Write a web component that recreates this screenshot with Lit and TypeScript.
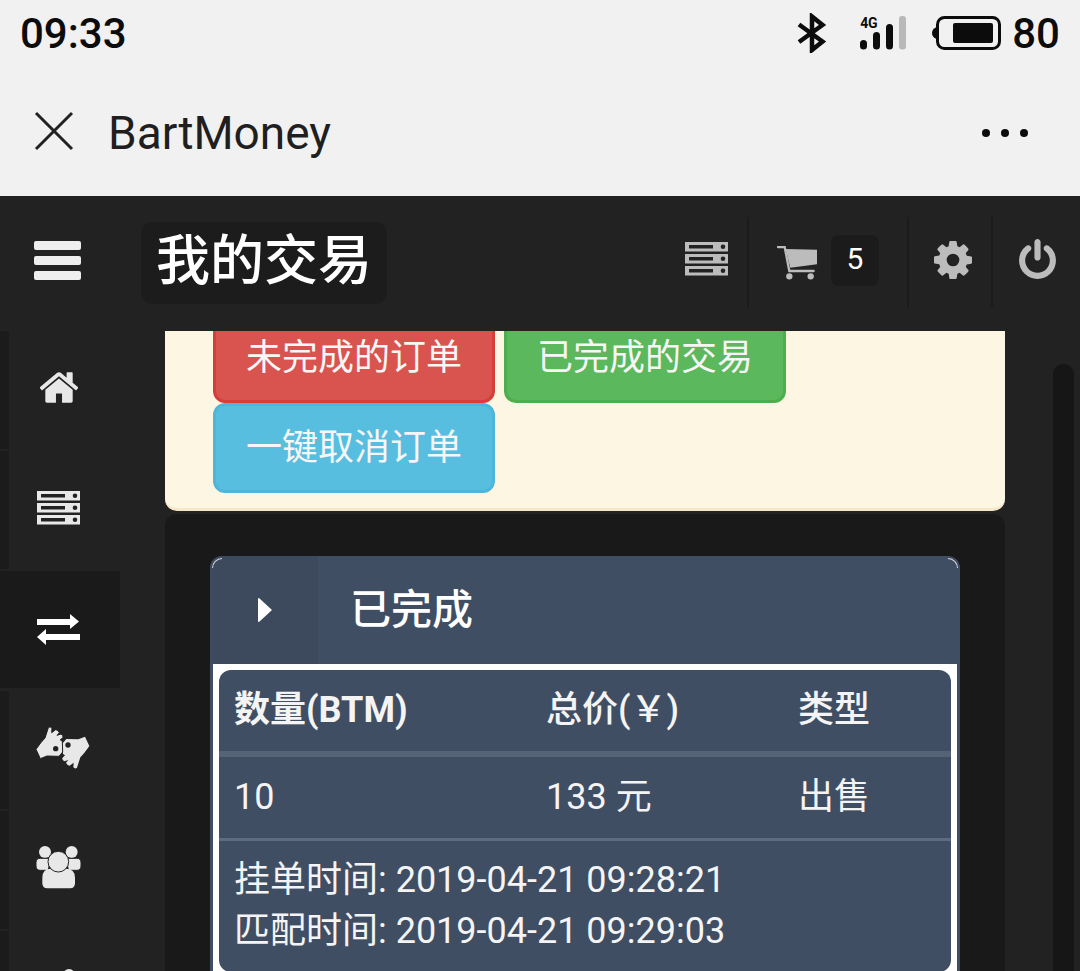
import { LitElement, html, css, svg } from "lit";
import { customElement } from "lit/decorators.js";

const COG = "M1152 896q0-106-75-181t-181-75-181 75-75 181 75 181 181 75 181-75 75-181zm512-109v222q0 12-8 23t-20 13l-185 28q-19 54-39 91 35 50 107 138 10 12 10 25t-9 23q-27 37-99 108t-94 71q-12 0-26-9l-138-108q-44 23-91 38-16 136-29 186-7 28-36 28h-222q-14 0-24.500-8.500t-11.500-21.500l-28-184q-49-16-90-37l-141 107q-10 9-25 9-14 0-25-11-126-114-165-168-7-10-7-23 0-12 8-23 15-21 51-66.500t54-70.500q-27-50-41-99l-183-27q-13-2-21-12.500t-8-23.500v-222q0-12 8-23t19-13l186-28q14-46 39-92-40-57-107-138-10-12-10-24 0-10 9-23 26-36 98.500-107.500t94.500-71.500q13 0 26 10l138 107q44-23 91-38 16-136 29-186 7-28 36-28h222q14 0 24.500 8.500t11.500 21.500l28 184q49 16 90 37l142-107q9-9 24-9 13 0 25 10 129 119 165 170 7 8 7 22 0 12-8 23-15 21-51 66.500t-54 70.500q26 50 41 98l183 28q13 2 21 12.500t8 23.500z";
const POWER = "M1664 896q0 156-61 298t-164 245-245 164-298 61-298-61-245-164-164-245-61-298q0-182 80.500-343t226.500-270q43-32 95.500-25t83.500 50q32 42 24.500 94.500t-49.500 84.500q-98 74-151.500 181t-53.500 228q0 104 40.500 198.500t109.500 163.500 163.500 109.500 198.500 40.500 198.500-40.500 163.500-109.500 109.500-163.500 40.500-198.500q0-121-53.500-228t-151.500-181q-42-32-49.500-84.500t24.500-94.500q31-43 84-50t95 25q146 109 226.500 270t80.500 343zm-640-768v640q0 52-38 90t-90 38-90-38-38-90v-640q0-52 38-90t90-38 90 38 38 90z";
const HOME = "M1472 992v480q0 26-19 45t-45 19h-384v-384h-256v384h-384q-26 0-45-19t-19-45v-480q0-1 .5-3t.5-3l575-474 575 474q1 2 1 6zm223-69l-62 74q-8 9-21 11h-3q-13 0-21-7l-692-577-692 577q-12 8-24 7-13-2-21-11l-62-74q-8-10-7-23.500t11-21.500l719-599q32-26 76-26t76 26l244 204v-195q0-14 9-23t23-9h192q14 0 23 9t9 23v408l219 182q10 8 11 21.500t-7 23.500z";
const HAND = "M33 92 Q48 70 60 58 L70 27 Q75 22 81 28 L80 42 L92 33 Q99 33 103 42 L96 50 L108 46 Q115 50 114 56 L106 64 L112 68 L113 100 L102 113 L66 112 L46 120 Z";

const serverIcon = (fill: string, bg: string) => html`<svg width="43" height="34" viewBox="0 0 43 34">
  ${[0, 12, 24].map((y) => svg`
    <rect x="0" y="${y}" width="43" height="9.500" fill="${fill}"/>
    <rect x="4" y="${y + 3}" width="24" height="3.500" fill="${bg}"/>
    <circle cx="38" cy="${y + 4.750}" r="2.300" fill="${bg}"/>`)}
</svg>`;

@customElement("app-root")
export class AppRoot extends LitElement {
  static styles = css`
    :host {
      display: block;
      width: 1080px;
      height: 971px;
      overflow: hidden;
      font-family: Roboto, "Noto Sans CJK SC", sans-serif;
      background: #222;
    }
    svg { display: block; flex: none; }

    .status {
      height: 66px;
      background: #f1f1f1;
      display: flex;
      align-items: center;
      padding: 0 20px 0 20px;
      color: #0c0c0c;
    }
    .clock { font-size: 42px; font-weight: 500; line-height: 64px; padding-top: 2px; flex: 1; }
    .bt { margin-right: 33px; }
    .signal { margin-right: 25px; }
    .four-g {
      font-size: 14px;
      font-weight: 700;
      line-height: 14px;
      letter-spacing: -0.300px;
    }
    .net { position: relative; width: 47px; height: 34px; }
    .net .four-g { position: absolute; top: 0; left: 0; }
    .net svg { position: absolute; left: 0; top: 0; }
    .pct { font-size: 42px; font-weight: 500; line-height: 64px; padding-top: 2px; margin-left: 11px; }

    .title {
      height: 130px;
      background: #f1f1f1;
      display: flex;
      align-items: center;
      padding: 0 0 0 34px;
    }
    .title .name { font-size: 46px; color: #1f1f1f; margin-left: 34px; flex: 1; line-height: 120px; padding-top: 4px; }
    .title .more { margin: 3px 52px 0 0; }

    .top {
      height: 135px;
      background: #222;
      display: flex;
      align-items: center;
    }
    .burger {
      width: 47px;
      margin: 0 0 6px 34px;
      display: flex;
      flex-direction: column;
      gap: 6px;
    }
    .burger i { display: block; height: 9px; background: #eee; border-radius: 2px; }
    .chip {
      margin: 0 0 2px 60px;
      height: 82px;
      width: 246px;
      box-sizing: border-box;
      background: #1c1c1c;
      border-radius: 12px;
      color: #fff;
      font-size: 54px;
      font-weight: 500;
      line-height: 80px;
      text-align: center;
      white-space: nowrap;
    }
    .tools { margin: 0 0 4px auto; display: flex; align-items: center; height: 90px; }
    .div { width: 2px; height: 90px; background: #1b1b1b; flex: none; }
    .badge {
      width: 48px;
      height: 51px;
      background: #1b1b1b;
      border-radius: 8px;
      color: #fff;
      font-size: 30px;
      line-height: 48px;
      text-align: center;
      margin: 0 28px 2px 14px;
    }
    .t-server { margin: 0 19px 6px 0; }
    .t-cart { margin: 3px 0 0 28px; }
    .t-cog { margin: 0 19px 4px 25px; }
    .t-pow { margin: 0 24px 6px 26px; }

    .body { display: flex; height: 640px; background: #222; overflow: hidden; }
    .side { width: 120px; flex: none; display: flex; flex-direction: column; }
    .item {
      height: 118px;
      flex: none;
      margin-bottom: 2px;
      border-left: 9px solid #1b1b1b;
      display: flex;
      align-items: center;
      justify-content: center;
      padding: 0 12px 5px 0;
      box-sizing: border-box;
      width: 120px;
    }
    .item.on {
      height: 117px;
      background: #1a1a1a;
      border-left-color: #1a1a1a;
      padding-bottom: 0;
      margin-bottom: 3px;
    }
    .hands { margin-left: 9px; }

    .main { width: 840px; margin-left: 45px; flex: none; overflow: hidden; }
    .notice {
      margin-top: -18px;
      background: #fdf6e3;
      border-bottom: 3px solid #f5e8c8;
      border-radius: 0 0 12px 12px;
      padding: 0 48px 18px;
      box-sizing: border-box;
      height: 198px;
      display: flex;
      flex-wrap: wrap;
      align-content: flex-start;
      column-gap: 9px;
    }
    .btn {
      width: 282px;
      height: 90px;
      box-sizing: border-box;
      border-radius: 12px;
      border: 3px solid;
      color: #f6f6f6;
      font-size: 36px;
      line-height: 84px;
      text-align: center;
      white-space: nowrap;
    }
    .red { background: #d9534f; border-color: #d43f3a; }
    .green { background: #5cb85c; border-color: #4cae4c; }
    .blue { background: #58bee0; border-color: #4db6da; }

    .panel {
      margin-top: 3px;
      background: #191919;
      border-radius: 12px 12px 0 0;
      padding: 42px 45px 0 45px;
      height: 460px;
      box-sizing: border-box;
    }
    .widget { position: relative; width: 750px; }
    .w-head {
      height: 108px;
      background: #404e64;
      border-radius: 12px 12px 0 0;
      display: flex;
      align-items: center;
      overflow: hidden;
    }
    .w-arrow {
      width: 108px;
      height: 108px;
      background: #3d4a5d;
      display: flex;
      align-items: center;
      justify-content: center;
      flex: none;
      padding-left: 2px;
      box-sizing: border-box;
    }
    .w-title { color: #fff; font-size: 41px; font-weight: 500; margin-left: 32px; line-height: 106px; }
    .arc {
      position: absolute;
      top: 2px;
      width: 10px;
      height: 10px;
      border-top: 1px solid rgba(255,255,255,.8);
      box-sizing: border-box;
    }
    .arc.l { left: 2px; border-left: 1px solid rgba(255,255,255,.8); border-top-left-radius: 10px; }
    .arc.r { right: 2px; border-right: 1px solid rgba(255,255,255,.8); border-top-right-radius: 10px; }
    .w-body {
      border: solid #404e64;
      border-width: 0 3px;
      background: #fff;
      padding: 6px 6px 0;
    }
    .card {
      background: #404e64;
      border-radius: 12px;
      color: #f4f4f4;
      font-size: 36px;
      height: 302px;
      overflow: hidden;
    }
    .row {
      display: grid;
      grid-template-columns: 312px 252px 1fr;
      padding-left: 15px;
      height: 81px;
      line-height: 80px;
      box-sizing: content-box;
      white-space: nowrap;
    }
    .head { font-weight: 700; border-bottom: 6px solid #556377; }
    .head span:nth-child(n+2) { font-weight: 500; }
    .vals { border-bottom: 3px solid #5f6c80; }
    .info { padding: 14px 0 0 15px; line-height: 51px; white-space: nowrap; }

    .bar {
      width: 21px;
      flex: none;
      margin: 33px 0 0 48px;
      background: #161616;
      border-radius: 10px 10px 0 0;
    }
  `;

  render() {
    return html`
      <div class="status">
        <span class="clock">09:33</span>
        <svg class="bt" width="30" height="40" viewBox="0 0 30 40">
          <path d="M2 11.500 L25.500 28.500 L15 37 V3.500 L25.500 12 L2 29" fill="none" stroke="#0c0c0c" stroke-width="4.500"/>
        </svg>
        <div class="net signal">
          <span class="four-g">4G</span>
          <svg width="47" height="34" viewBox="0 0 47 34">
            <rect x="0" y="24" width="7" height="9.500" rx="3.500" fill="#0c0c0c"/>
            <rect x="13" y="16" width="7" height="17.500" rx="3.500" fill="#0c0c0c"/>
            <rect x="26" y="8" width="7" height="25.500" rx="3.500" fill="#0c0c0c"/>
            <rect x="39" y="0" width="7" height="33.500" rx="3" fill="#b9b9b9"/>
          </svg>
        </div>
        <svg width="69" height="34" viewBox="0 0 69 34">
          <path d="M4.500 11 Q0 13 0 17 Q0 21 4.500 23 Z" fill="#0c0c0c"/>
          <rect x="5.500" y="1.500" width="62" height="31" rx="7" fill="none" stroke="#0c0c0c" stroke-width="3"/>
          <rect x="21" y="7" width="40" height="20" rx="2" fill="#0c0c0c"/>
        </svg>
        <span class="pct">80</span>
      </div>

      <div class="title">
        <svg width="40" height="40" viewBox="0 0 40 40">
          <path d="M2 2 L38 38 M38 2 L2 38" stroke="#222" stroke-width="3" fill="none"/>
        </svg>
        <span class="name">BartMoney</span>
        <svg class="more" width="46" height="8" viewBox="0 0 46 8">
          <circle cx="4" cy="4" r="4" fill="#0c0c0c"/><circle cx="23" cy="4" r="4" fill="#0c0c0c"/><circle cx="42" cy="4" r="4" fill="#0c0c0c"/>
        </svg>
      </div>

      <div class="top">
        <div class="burger"><i></i><i></i><i></i></div>
        <div class="chip">我的交易</div>
        <div class="tools">
          <span class="t-server">${serverIcon("#bcbcbc", "#222")}</span>
          <span class="div"></span>
          <svg class="t-cart" width="40" height="35" viewBox="18 27 120 105">
            <path d="M21 30 H41 L55 102 H128" fill="none" stroke="#bcbcbc" stroke-width="7" stroke-linecap="round"/>
            <path d="M44 36 L138 38 V82 L58 92 Z" fill="#bcbcbc"/>
            <circle cx="55" cy="118" r="9.500" fill="#bcbcbc"/>
            <circle cx="119" cy="118" r="9.500" fill="#bcbcbc"/>
          </svg>
          <span class="badge">5</span>
          <span class="div"></span>
          <svg class="t-cog" width="38" height="38" viewBox="128 128 1536 1536"><path d="${COG}" fill="#bcbcbc"/></svg>
          <span class="div"></span>
          <svg class="t-pow" width="37" height="40" viewBox="128 0 1536 1664"><path d="${POWER}" fill="#bcbcbc"/></svg>
        </div>
      </div>

      <div class="body">
        <div class="side">
          <div class="item">
            <svg width="38" height="31" viewBox="96 256 1600 1280"><path d="${HOME}" fill="#e8e8e8"/></svg>
          </div>
          <div class="item">${serverIcon("#e8e8e8", "#222")}</div>
          <div class="item on">
            <svg width="43" height="32" viewBox="0 0 43 32">
              <path d="M0 5 H33 V0 L42 7.500 L33 15 V11 H0 Z M43 20 H9 V15 L0 23 L9 31 V26 H43 Z" fill="#fff"/>
            </svg>
          </div>
          <div class="item">
            <svg class="hands" width="56" height="42" viewBox="30 25 168 126">
              <g transform="rotate(180 113 87)">
                <path d="${HAND}" fill="#e8e8e8"/>
              </g>
              <path d="${HAND}" fill="#e8e8e8" stroke="#222" stroke-width="3" stroke-linejoin="round"/>
              <circle cx="92" cy="90" r="8" fill="#222"/>
              <circle cx="129" cy="79" r="8" fill="#222"/>
            </svg>
          </div>
          <div class="item">
            <svg width="45" height="43" viewBox="33 20 135 129">
              <circle cx="60" cy="38" r="18" fill="#e8e8e8"/>
              <circle cx="140" cy="38" r="18" fill="#e8e8e8"/>
              <path d="M70 93 H46 Q33 93 33 80 V70 Q33 57 46 57 H76 Z" fill="#e8e8e8" stroke="#222" stroke-width="3"/>
              <path d="M130 93 H155 Q168 93 168 80 V70 Q168 57 155 57 H124 Z" fill="#e8e8e8" stroke="#222" stroke-width="3"/>
              <path d="M52 132 V115 Q52 88 78 88 H122 Q150 88 150 115 V132 Q150 147 135 147 H67 Q52 147 52 132 Z" fill="#e8e8e8"/>
              <circle cx="100" cy="67" r="31" fill="#e8e8e8" stroke="#222" stroke-width="3"/>
            </svg>
          </div>
          <div class="item">
            <svg width="43" height="38" viewBox="0 0 43 38">
              <circle cx="32" cy="6" r="6" fill="#e8e8e8"/>
            </svg>
          </div>
        </div>

        <div class="main">
          <div class="notice">
            <div class="btn red">未完成的订单</div>
            <div class="btn green">已完成的交易</div>
            <div class="btn blue">一键取消订单</div>
          </div>
          <div class="panel">
            <div class="widget">
              <span class="arc l"></span><span class="arc r"></span>
              <div class="w-head">
                <div class="w-arrow">
                  <svg width="14" height="24" viewBox="0 0 14 24"><path d="M0 1 Q0 0 1 0 L14 12 L1 24 Q0 24 0 23 Z" fill="#fff"/></svg>
                </div>
                <span class="w-title">已完成</span>
              </div>
              <div class="w-body">
                <div class="card">
                  <div class="row head"><span>数量(BTM)</span><span>总价(￥)</span><span>类型</span></div>
                  <div class="row vals"><span>10</span><span>133 元</span><span>出售</span></div>
                  <div class="info">挂单时间: 2019-04-21 09:28:21<br />匹配时间: 2019-04-21 09:29:03</div>
                </div>
              </div>
            </div>
          </div>
        </div>

        <div class="bar"></div>
      </div>
    `;
  }
}
